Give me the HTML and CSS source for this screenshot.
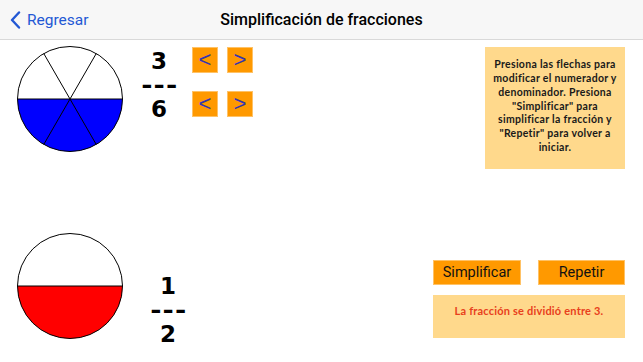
FILE: index.html
```html
<!DOCTYPE html>
<html lang="es">
<head>
<meta charset="utf-8">
<title>Simplificación de fracciones</title>
<link rel="stylesheet" href="styles.css">
</head>
<body>
<header class="nav">
  <a class="back" href="#">
    <svg class="chev" width="11" height="18" viewBox="0 0 11 18"><path d="M9 1.5 L2 9 L9 16.5" fill="none" stroke="#2358d4" stroke-width="2.4" stroke-linecap="round" stroke-linejoin="round"/></svg>
    <span>Regresar</span>
  </a>
  <h1 class="title">Simplificación de fracciones</h1>
  <div class="nav-spacer"></div>
</header>
<main class="content">
  <section class="row row-top">
    <svg class="pie" width="106" height="106" viewBox="0 0 106 106">
      <circle cx="53" cy="53" r="52.5" fill="#fff"/>
      <path d="M0.5 53 A52.5 52.5 0 0 0 105.5 53 Z" fill="#0000ff"/>
      <line x1="0.5" y1="53" x2="105.5" y2="53" stroke="#000" stroke-width="1"/>
      <line x1="26.75" y1="7.53" x2="79.25" y2="98.47" stroke="#000" stroke-width="1"/>
      <line x1="79.25" y1="7.53" x2="26.75" y2="98.47" stroke="#000" stroke-width="1"/>
      <circle cx="53" cy="53" r="52.5" fill="none" stroke="#000" stroke-width="1"/>
    </svg>
    <div class="fraction f-top">
      <span>3</span><span class="bar">---</span><span>6</span>
    </div>
    <div class="arrows">
      <button class="arrow">&lt;</button>
      <button class="arrow">&gt;</button>
      <button class="arrow">&lt;</button>
      <button class="arrow">&gt;</button>
    </div>
    <div class="info">Presiona las flechas para<br>modificar el numerador y<br>denominador. Presiona<br>"Simplificar" para<br>simplificar la fracción y<br>"Repetir" para volver a<br>iniciar.</div>
  </section>
  <section class="row row-bottom">
    <svg class="pie" width="106" height="106" viewBox="0 0 106 106">
      <circle cx="53" cy="53" r="52.5" fill="#fff"/>
      <path d="M0.5 53 A52.5 52.5 0 0 0 105.5 53 Z" fill="#ff0000"/>
      <line x1="0.5" y1="53" x2="105.5" y2="53" stroke="#000" stroke-width="1"/>
      <circle cx="53" cy="53" r="52.5" fill="none" stroke="#000" stroke-width="1"/>
    </svg>
    <div class="fraction f-bottom">
      <span>1</span><span class="bar">---</span><span>2</span>
    </div>
    <div class="actions">
      <div class="btn-row">
        <button class="btn">Simplificar</button>
        <button class="btn">Repetir</button>
      </div>
      <div class="message">La fracción se dividió entre 3.</div>
    </div>
  </section>
</main>
</body>
</html>
```
FILE: styles.css
```css
* { box-sizing: border-box; }
html, body { margin: 0; padding: 0; }
body {
  width: 643px;
  height: 362px;
  background: #fff;
  font-family: "Liberation Sans", Arial, sans-serif;
  overflow: hidden;
}
.nav {
  height: 40px;
  background: #f7f7f7;
  border-bottom: 1px solid #d9d9d9;
  display: grid;
  grid-template-columns: 1fr auto 1fr;
  align-items: center;
}
.back {
  display: flex;
  align-items: center;
  gap: 6px;
  padding-left: 10px;
  color: #2358d4;
  text-decoration: none;
  font-family: Roboto, "Liberation Sans", sans-serif;
  font-size: 15.5px;
}
.title {
  margin: 0;
  font-family: Roboto, "Liberation Sans", sans-serif;
  font-size: 16px;
  font-weight: 500;
  color: #000;
}
.content {
  display: flex;
  flex-direction: column;
  padding: 0 18px 0 17px;
}
.row {
  display: flex;
  align-items: flex-start;
}
.row-top { padding-top: 6px; height: 193px; }
.pie { display: block; flex: none; }
.fraction {
  width: 36px;
  display: flex;
  flex-direction: column;
  align-items: center;
  font-family: "DejaVu Sans", sans-serif;
  font-weight: bold;
  font-size: 23px;
  line-height: 24px;
  color: #000;
}
.fraction .bar {
  display: inline-block;
  letter-spacing: 1px;
  margin-right: -1px;
  transform: scaleX(1.18);
}
.f-top { margin-left: 18px; margin-top: 3px; }
.f-bottom { margin-left: 27px; margin-top: 41px; }
.arrows {
  display: grid;
  grid-template-columns: 26px 26px;
  grid-auto-rows: 26px;
  column-gap: 9px;
  row-gap: 18px;
  margin-left: 15px;
  margin-top: 1px;
}
.arrow {
  width: 26px;
  height: 26px;
  border: 1px solid #ffc266;
  padding: 0;
  background: #ff9900;
  color: #3535b0;
  font-family: "Liberation Sans", sans-serif;
  font-size: 22px;
  line-height: 24px;
}
.info {
  margin-left: auto;
  margin-top: 1px;
  width: 140px;
  height: 122px;
  background: #ffd98c;
  display: flex;
  align-items: center;
  justify-content: center;
  text-align: center;
  padding: 0 2px 3px;
  font-family: Lato, "Liberation Sans", sans-serif;
  font-weight: bold;
  font-size: 10.5px;
  letter-spacing: 0.3px;
  line-height: 13.8px;
  color: #1a1a1a;
  white-space: nowrap;
}
.actions {
  margin-left: auto;
  margin-top: 27px;
  width: 192px;
  display: flex;
  flex-direction: column;
  gap: 10px;
}
.btn-row { display: flex; justify-content: space-between; }
.btn {
  width: 88px;
  height: 25px;
  padding: 0;
  border: 1px solid #ffc266;
  background: #ff9900;
  color: #111;
  font-family: Roboto, "Liberation Sans", sans-serif;
  font-size: 14.5px;
}
.btn-row .btn:last-child { width: 87px; }
.message {
  height: 43px;
  background: #ffd98c;
  display: flex;
  justify-content: center;
  padding-top: 9px;
  font-family: Lato, "Liberation Sans", sans-serif;
  font-weight: bold;
  font-size: 11px;
  letter-spacing: 0.2px;
  color: #e8401c;
}
```
